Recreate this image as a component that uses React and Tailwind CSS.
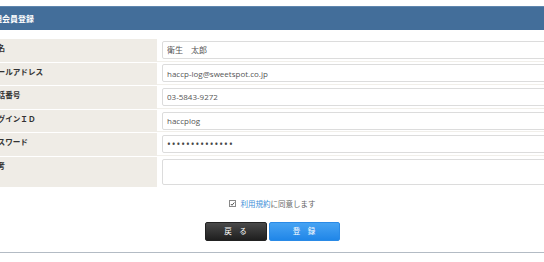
import React from 'react';

const fields = [
  { label: '氏名', value: '衛生　太郎' },
  { label: 'メールアドレス', value: 'haccp-log@sweetspot.co.jp' },
  { label: '電話番号', value: '03-5843-9272' },
  { label: 'ログインＩＤ', value: 'haccplog' },
  { label: 'パスワード', value: '••••••••••••••', password: true },
];

const font = "font-['Open_Sans','Noto_Sans_CJK_JP',sans-serif]";

const App = () => {
  return (
    <div className={`w-[544px] h-[262px] overflow-hidden bg-white ${font}`}>
      <div className="w-[564px] -ml-[10px] pt-[6px]">
        <div className="h-[24px] bg-[#436e9a] border-t border-[#5f86ae] flex items-center">
          <span className="-ml-[4px] text-white text-[8px] font-bold">新規会員登録</span>
        </div>

        <div className="mt-[9px]">
          {fields.map(f => (
            <div key={f.label} className="flex border-b border-white">
              <div className="w-[167px] h-[22.6px] bg-[#efece6] pt-[4px] text-[7.6px] leading-[10px] font-bold text-[#333]">
                {f.label}
              </div>
              <div className="flex-1 flex items-center pl-[5px] pr-[4px] border-b border-[#f1efea]">
                <input
                  readOnly
                  type="text"
                  value={f.value}
                  className={f.password
                    ? 'w-full h-[18px] border border-[#dcdcdc] rounded-[2px] px-[4px] text-[10px] tracking-[1px] text-[#444] outline-none'
                    : 'w-full h-[18px] border border-[#dcdcdc] rounded-[2px] px-[4px] text-[8px] text-[#555] outline-none'}
                />
              </div>
            </div>
          ))}
          <div className="flex">
            <div className="w-[167px] h-[30px] bg-[#efece6] pt-[4px] text-[7.6px] leading-[10px] font-bold text-[#333]">
              備考
            </div>
            <div className="flex-1 pl-[5px] pr-[4px] pt-[2px]">
              <textarea readOnly className="w-full h-[26px] border border-[#dcdcdc] rounded-[2px] resize-none outline-none block" />
            </div>
          </div>
        </div>

        <div className="flex justify-center items-center mt-[12px] text-[7.5px] leading-[10px]">
          <span className="w-[7px] h-[7px] border border-[#888] mr-[5px] flex items-center justify-center">
            <svg viewBox="0 0 6 6" className="w-[6px] h-[6px]">
              <path d="M1 3 L2.4 4.5 L5.2 1.2" fill="none" stroke="#444" strokeWidth="1.1" />
            </svg>
          </span>
          <span className="text-[#3d8fd9]">利用規約</span>
          <span className="text-[#666]">に同意します</span>
        </div>

        <div className="flex justify-center gap-[2px] mt-[13px]">
          <button className="w-[62px] h-[19px] rounded-[2px] bg-gradient-to-b from-[#4a4a4a] to-[#1f1f1f] text-white text-[7.5px] border border-[#222]">
            戻　る
          </button>
          <button className="w-[71px] h-[19px] rounded-[2px] bg-gradient-to-b from-[#46a3f3] to-[#1f86e8] text-white text-[7.5px] border border-[#2a8ae6]">
            登　録
          </button>
        </div>

        <div className="mt-[11px] border-t border-[#b3bbc4]" />
      </div>
    </div>
  );
};

export default App;
